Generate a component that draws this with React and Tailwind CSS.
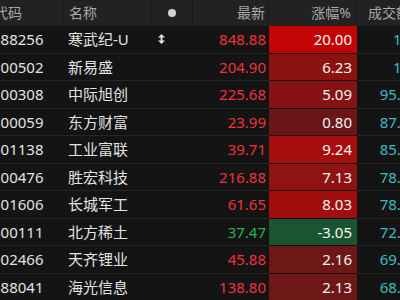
import React from "react";

const rows = [
  { code: "688256", name: "寒武纪-U", price: "848.88", chg: "20.00", bg: "bg-[#c20404]", up: true, vol: "1.5 亿", mark: true },
  { code: "300502", name: "新易盛", price: "204.90", chg: "6.23", bg: "bg-[#8c1212]", up: true, vol: "1.5 亿" },
  { code: "300308", name: "中际旭创", price: "225.68", chg: "5.09", bg: "bg-[#861313]", up: true, vol: "95.62亿" },
  { code: "300059", name: "东方财富", price: "23.99", chg: "0.80", bg: "bg-[#6a1616]", up: true, vol: "87.41亿" },
  { code: "601138", name: "工业富联", price: "39.71", chg: "9.24", bg: "bg-[#a60d0d]", up: true, vol: "85.27亿" },
  { code: "300476", name: "胜宏科技", price: "216.88", chg: "7.13", bg: "bg-[#8f1313]", up: true, vol: "78.90亿" },
  { code: "601606", name: "长城军工", price: "61.65", chg: "8.03", bg: "bg-[#a00e0e]", up: true, vol: "78.13亿" },
  { code: "600111", name: "北方稀土", price: "37.47", chg: "-3.05", bg: "bg-[#1b5431]", up: false, vol: "72.56亿" },
  { code: "002466", name: "天齐锂业", price: "45.88", chg: "2.16", bg: "bg-[#6e1717]", up: true, vol: "69.34亿" },
  { code: "688041", name: "海光信息", price: "138.80", chg: "2.13", bg: "bg-[#6e1717]", up: true, vol: "68.75亿" },
];

function UpDown() {
  return (
    <svg width="7" height="10" viewBox="0 0 7 10" className="block">
      <path d="M3.5 0 L7 3.5 L0 3.5 Z M0 6.5 L7 6.5 L3.5 10 Z" fill="#e4e4e4" />
      <rect x="2.6" y="3" width="1.8" height="4" fill="#e4e4e4" />
    </svg>
  );
}

export default function App() {
  const font = { fontFamily: '"Noto Sans", "Noto Sans CJK SC", sans-serif' };
  return (
    <div className="w-[400px] h-[300px] overflow-hidden bg-[#141414]" style={font}>
      <div className="w-[460px] -ml-[10px]">
        {/* 表头 */}
        <div className="flex h-[26px] bg-[#222222] text-[14px] text-[#a9a9a9] leading-[26px]">
          <div className="w-[73px] pl-[4px] border-r border-[#181818]">代码</div>
          <div className="w-[88px] pl-[6px] border-r border-[#181818]">名称</div>
          <div className="w-[42px] flex items-center justify-center border-r border-[#181818]">
            <div className="w-[8px] h-[8px] rounded-full bg-[#d2d2d2]" />
          </div>
          <div className="w-[76px] pr-[3px] text-right border-r border-[#181818]">最新</div>
          <div className="w-[88px] pr-[5px] text-right border-r border-[#181818]">涨幅%</div>
          <div className="w-[80px] pl-[11px]">成交额</div>
        </div>

        {rows.map((r) => (
          <div key={r.code} className="flex h-[27.5px] text-[15px] leading-[26.5px]">
            <div className="w-[73px] pl-[2px] text-[#e2e2e2] border-b border-[#262626]">{r.code}</div>
            <div className="w-[88px] pl-[5px] text-[#e2e2e2] border-b border-[#262626]">{r.name}</div>
            <div className="w-[42px] pl-[7px] flex items-center border-b border-[#262626]">
              {r.mark && <UpDown />}
            </div>
            <div className={`w-[76px] pr-[3px] text-right border-b border-[#262626] ${r.up ? "text-[#f2313b]" : "text-[#23b34f]"}`}>
              {r.price}
            </div>
            <div className={`w-[88px] pr-[5px] text-right text-[#f4f4f4] border-b border-[#1a0808] ${r.bg}`}>
              {r.chg}
            </div>
            <div className="w-[80px] pr-[4px] text-right text-[#39bcc4] border-b border-[#262626] whitespace-pre">{r.vol}</div>
          </div>
        ))}
      </div>
    </div>
  );
}
